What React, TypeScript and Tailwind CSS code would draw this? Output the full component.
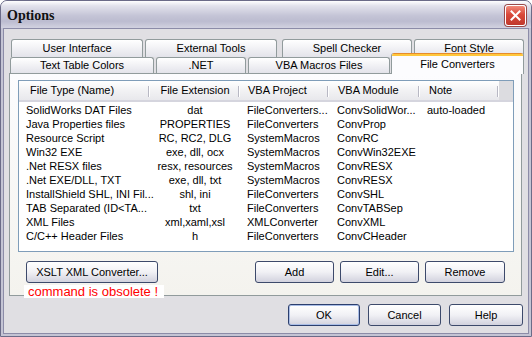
import React from "react";

const font = { fontFamily: '"Liberation Sans", Arial, sans-serif' };

const rows = [
  ["SolidWorks DAT Files", "dat", "FileConverters...", "ConvSolidWor...", "auto-loaded"],
  ["Java Properties files", "PROPERTIES", "FileConverters", "ConvProp", ""],
  ["Resource Script", "RC, RC2, DLG", "SystemMacros", "ConvRC", ""],
  ["Win32 EXE", "exe, dll, ocx", "SystemMacros", "ConvWin32EXE", ""],
  [".Net RESX files", "resx, resources", "SystemMacros", "ConvRESX", ""],
  [".Net EXE/DLL, TXT", "exe, dll, txt", "SystemMacros", "ConvRESX", ""],
  ["InstallShield SHL, INI Fil...", "shl, ini", "FileConverters", "ConvSHL", ""],
  ["TAB Separated (ID<TA...", "txt", "FileConverters", "ConvTABSep", ""],
  ["XML Files", "xml,xaml,xsl", "XMLConverter", "ConvXML", ""],
  ["C/C++ Header Files", "h", "FileConverters", "ConvCHeader", ""],
];

function Tab({ label, w, h = "h-[18px]" }: { label: string; w: string; h?: string }) {
  return (
    <div
      className={`${w} ${h} shrink-0 flex items-center justify-center rounded-t-[3px] border border-b-0 border-[#919b9c] bg-linear-to-b from-white to-[#e3e3ea] text-[11px] text-black`}
    >
      {label}
    </div>
  );
}

function Btn({ label, w, def = false }: { label: string; w: string; def?: boolean }) {
  return (
    <div
      className={`${w} h-[22px] shrink-0 flex items-center justify-center rounded-[3px] border ${
        def ? "border-[#2c3f6e] shadow-[inset_0_0_0_1px_#a9bde6]" : "border-[#3d4a6b]"
      } bg-linear-to-b from-white via-[#f1f1f5] to-[#d2d2de] text-[11px] text-black`}
    >
      {label}
    </div>
  );
}

function HeadCell({ label, center = false, pl = "pl-[11px]" }: { label: string; center?: boolean; pl?: string }) {
  return (
    <div className={`relative flex items-center ${center ? "justify-center" : pl}`}>
      {label}
      <span className="absolute right-0 top-[5px] h-[11px] w-[2px] border-l border-r border-l-[#b8b8c4] border-r-white" />
    </div>
  );
}

export default function App() {
  return (
    <div
      style={font}
      className="w-[532px] h-[337px] flex flex-col rounded-t-[7px] border border-[#6b6b88] bg-[#c4c4d4] overflow-hidden"
    >
      {/* title bar */}
      <div className="h-[27px] shrink-0 flex items-center justify-between pl-[6px] pr-[5px] bg-[linear-gradient(to_bottom,#ffffff_0%,#e2e2ec_18%,#c4c4d6_55%,#bcbcd0_75%,#d2d2e0_100%)]">
        <span
          className="text-[14px] font-bold text-[#111] mt-[1px]"
          style={{ fontFamily: '"Liberation Serif", "Times New Roman", serif' }}
        >
          Options
        </span>
        <div className="w-[21px] h-[21px] mt-[2px] rounded-[3px] border border-white bg-[linear-gradient(to_bottom,#f08a7a,#d9493a_45%,#c0382c)] shadow-[0_0_0_1px_#9a4a4a] flex items-center justify-center">
          <svg width="11" height="11" viewBox="0 0 11 11">
            <path d="M1.5 1.5 L9.5 9.5 M9.5 1.5 L1.5 9.5" stroke="white" strokeWidth="2" strokeLinecap="square" />
          </svg>
        </div>
      </div>

      {/* body */}
      <div className="flex-1 mx-[2px] mb-[2px] border border-[#8c8ca8] bg-[#e0dfe3] flex flex-col">
        {/* tabs row 1 */}
        <div className="mt-[10px] ml-[7px] flex gap-[2px]">
          <Tab label="User Interface" w="w-[132px]" />
          <Tab label="External Tools" w="w-[132px]" />
          <div className="w-[1px]" />
          <Tab label="Spell Checker" w="w-[130px]" />
          <Tab label="Font Style" w="w-[110px]" />
        </div>
        {/* tabs row 2 */}
        <div className="ml-[6px] h-[16px] flex items-end gap-[2px]">
          <Tab label="Text Table Colors" w="w-[144px]" h="h-[16px]" />
          <Tab label=".NET" w="w-[90px]" h="h-[16px]" />
          <Tab label="VBA Macros Files" w="w-[142px]" h="h-[16px]" />
          <div className="relative z-10 -ml-[1px] w-[133px] h-[21px] translate-y-[1px] shrink-0 flex flex-col rounded-t-[3px] border border-b-0 border-[#919b9c] border-t-0 bg-[#fcfcfe] overflow-hidden">
            <div className="h-[1px] bg-[#e68b2c]" />
            <div className="h-[2px] bg-[#ffc73c]" />
            <div className="flex-1 flex items-center justify-center text-[11px] text-black pb-[2px]">
              File Converters
            </div>
          </div>
        </div>

        {/* tab page */}
        <div className="relative ml-[5px] mr-[6px] h-[223px] border border-[#919b9c] bg-linear-to-b from-[#fcfcfe] to-[#f4f3ee] flex flex-col">
          {/* list view */}
          <div className="mt-[6px] ml-[8px] w-[496px] h-[172px] border border-[#7f9db9] bg-white text-[11px] text-black flex flex-col">
            <div className="h-[21px] shrink-0 flex bg-linear-to-b from-white via-[#f2f2f4] to-[#e8e8ec] border-b-[2px] border-[#d5d5de]">
              <div className="grid grid-cols-[131px_90px_89px_91px_79px] w-[480px]">
                <HeadCell label="File Type (Name)" />
                <HeadCell label="File Extension" center />
                <HeadCell label="VBA Project" pl="pl-[8px]" />
                <HeadCell label="VBA Module" pl="pl-[9px]" />
                <HeadCell label="Note" pl="pl-[9px]" />
              </div>
              <div className="flex-1 bg-[#dcdce0]" />
            </div>
            <div className="flex flex-col pt-[1px]">
              {rows.map((r, i) => (
                <div key={i} className="grid grid-cols-[131px_90px_89px_91px_79px] h-[14px] leading-[14px] whitespace-nowrap">
                  <div className="pl-[7px]">{r[0]}</div>
                  <div className="text-center">{r[1]}</div>
                  <div className="pl-[7px]">{r[2]}</div>
                  <div className="pl-[8px]">{r[3]}</div>
                  <div className="pl-[7px]">{r[4]}</div>
                </div>
              ))}
            </div>
          </div>

          {/* panel buttons */}
          <div className="mt-[9px] pl-[16px] pr-[16px] flex">
            <Btn label="XSLT XML Converter..." w="w-[132px]" />
            <div className="flex-1" />
            <div className="flex gap-[6px]">
              <Btn label="Add" w="w-[79px]" />
              <Btn label="Edit..." w="w-[79px]" />
              <Btn label="Remove" w="w-[80px]" />
            </div>
          </div>

          {/* obsolete note */}
          <div className="absolute left-[14px] top-[211px] w-[140px] h-[13px] bg-white flex items-center pl-[4px] text-[13px] leading-[13px] text-[#ff0000]">
            command is obsolete !
          </div>
        </div>

        {/* dialog buttons */}
        <div className="mt-[8px] mr-[5px] flex justify-end gap-[8px]">
          <Btn label="OK" w="w-[72px]" def />
          <Btn label="Cancel" w="w-[73px]" />
          <Btn label="Help" w="w-[74px]" />
        </div>
      </div>
    </div>
  );
}
